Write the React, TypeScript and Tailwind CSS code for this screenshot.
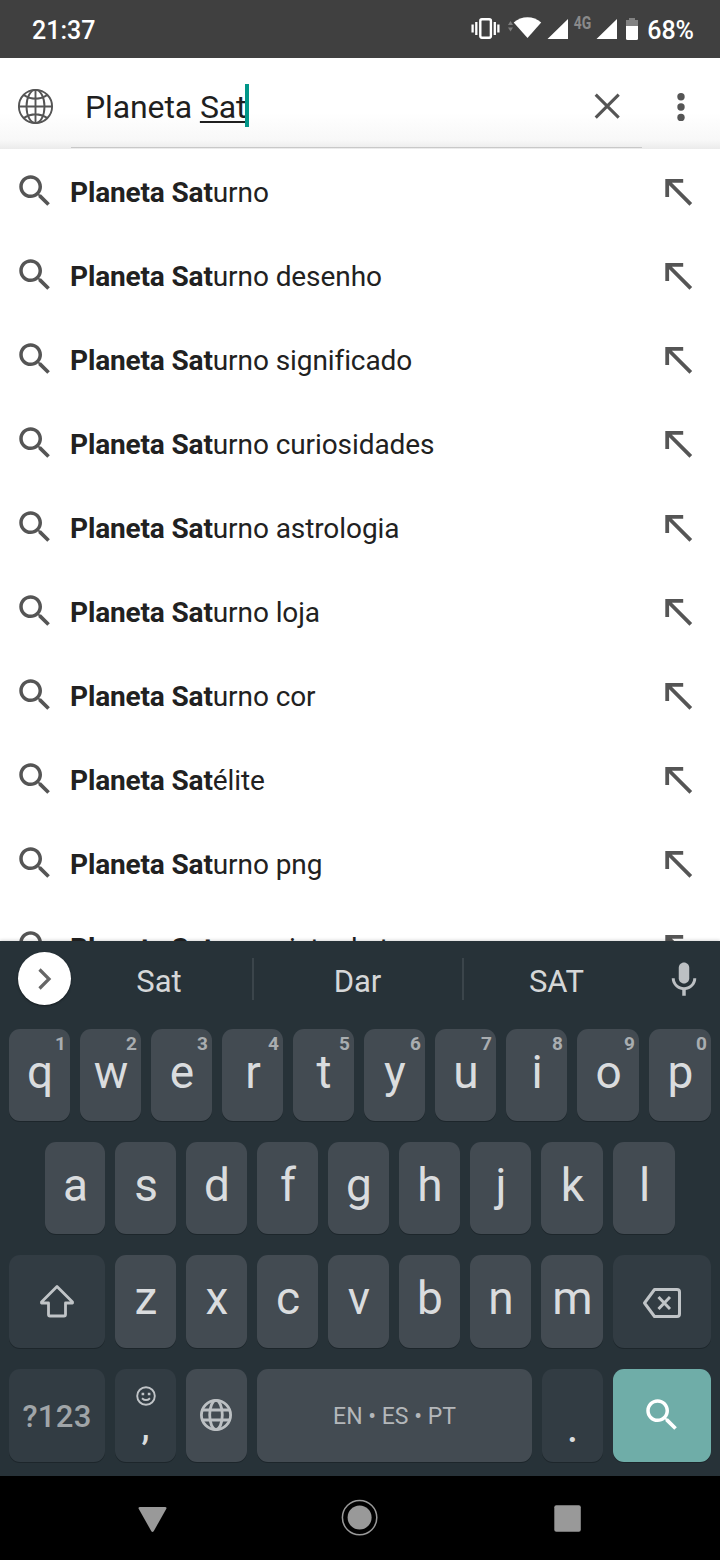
import React from 'react';

const suggestions = [
  ['Planeta Sat', 'urno'],
  ['Planeta Sat', 'urno desenho'],
  ['Planeta Sat', 'urno significado'],
  ['Planeta Sat', 'urno curiosidades'],
  ['Planeta Sat', 'urno astrologia'],
  ['Planeta Sat', 'urno loja'],
  ['Planeta Sat', 'urno cor'],
  ['Planeta Sat', 'élite'],
  ['Planeta Sat', 'urno png'],
  ['Planeta Sat', 'urno visto da terra'],
];

const SearchIcon: React.FC<{ className?: string }> = ({ className }) => (
  <svg viewBox="0 0 24 24" width="42" height="42" fill="currentColor" className={className}>
    <path d="M15.5 14h-.79l-.28-.27C15.41 12.59 16 11.11 16 9.5 16 5.91 13.09 3 9.5 3S3 5.91 3 9.5 5.91 16 9.5 16c1.61 0 3.09-.59 4.23-1.57l.27.28v.79l5 4.99L20.49 19l-4.99-5zm-6 0C7.01 14 5 11.99 5 9.5S7.01 5 9.5 5 14 7.01 14 9.5 11.99 14 9.5 14z" />
  </svg>
);

const StatusBar: React.FC = () => (
  <div className="h-[58px] bg-[#404040] text-white flex items-center justify-between pl-8 pr-[26px]">
    <span className="text-[25px] font-medium leading-[58px] pt-[3px]">21:37</span>
    <div className="flex items-center">
      <svg width="172" height="58" viewBox="468 0 172 58">
        <rect x="480.3" y="19.3" width="10.6" height="18.4" rx="1.6" fill="none" stroke="#fff" strokeWidth="2.4" />
        <path d="M476.3 22v13M472.6 24.5v8M494.8 22v13M498.4 24.5v8" stroke="#fff" strokeWidth="2.3" />
        <path d="M508 25l2.5-4 2.5 4zM508 27.5h5l-2.5 4z" fill="#7d7d7d" />
        <path d="M513.7 22.6C521.5 15.3 533.500 15.3 541.2 22.6L527.500 38z" fill="#fff" />
        <path d="M568 19v20h-20.500zM617 19v20h-20.500z" fill="#fff" />
        <text x="573.7" y="29" fontSize="17.500" fontWeight="700" fill="#8a8a8a" textLength="17.5" lengthAdjust="spacingAndGlyphs">4G</text>
        <path d="M629 18h6v2h3v6.500h-12V20h3z" fill="#828282" />
        <path d="M626 26h12v12.500q0 1.500-1.500 1.500h-9q-1.500 0-1.500-1.500z" fill="#fff" />
      </svg>
      <span className="text-[25px] font-medium leading-[58px] pt-[3px] pl-[7px]">68%</span>
    </div>
  </div>
);

const SearchBar: React.FC = () => (
  <div className="h-[91px] flex items-center bg-gradient-to-b from-white from-60% via-[#f8f8f8] via-90% to-[#ebebeb] text-[#555555]">
    <svg width="71" height="91" viewBox="0 58 71 91" fill="none" stroke="currentColor" strokeWidth="1.9">
      <circle cx="35.500" cy="106.500" r="16.600" />
      <ellipse cx="35.500" cy="106.500" rx="9" ry="16.600" />
      <path d="M35.500 90v33M19 106.500h33M23.500 95q12 7.500 24 0M23.500 118q12-7.500 24 0" />
    </svg>
    <div className="w-[571px] h-[90px] self-start border-b border-[#c8c8c8] pl-[14px] flex items-center justify-between">
      <div className="flex items-center pt-[6px] text-[32px] leading-[43px] text-[#1f1f1f]">
        <span className="whitespace-pre tracking-[-0.12px] pt-[3px]">Planeta <span className="underline decoration-2 underline-offset-[3px]">Sat</span></span>
        <span className="w-1 h-[43px] bg-[#009688] -ml-px -mt-px" />
      </div>
      <svg width="28" height="28" viewBox="593 92 28 28" className="mr-[21px] mt-[7px]" stroke="currentColor" strokeWidth="3.1">
        <path d="M595.700 94.700l23 23M618.700 94.700l-23 23" />
      </svg>
    </div>
    <svg width="78" height="91" viewBox="642 58 78 91" fill="currentColor">
      <circle cx="681" cy="96.700" r="3.700" />
      <circle cx="681" cy="107" r="3.700" />
      <circle cx="681" cy="117.400" r="3.700" />
    </svg>
  </div>
);

const Suggestion: React.FC<{ match: string; rest: string }> = ({ match, rest }) => (
  <li className="h-[84px] shrink-0 flex items-center pl-[14px] pr-[27px] text-[#555555]">
    <SearchIcon className="-mt-[2px]" />
    <span className="flex-1 pl-[14px] pt-[2px] text-[28px] leading-[82px] text-[#212121] whitespace-nowrap tracking-[-0.08px]">
      <b className="font-bold tracking-[-0.15px]">{match}</b>{rest}
    </span>
    <svg width="29" height="28" viewBox="0 0 29 28" fill="none" stroke="currentColor" strokeWidth="3.800" className="-mt-px">
      <path d="M19.200 2.800H3.200v16.300M4 3.500l22.800 22.800" />
    </svg>
  </li>
);

const Key: React.FC<{ label: string; hint?: string }> = ({ label, hint }) => (
  <div className="relative w-[61px] pl-px bg-[#434b52] rounded-[11px] shadow-[0_1px_0_#1d262b] text-center text-[46px] leading-[86px] text-[#dadcde]">
    {label}
    {hint && (
      <span className="absolute right-[4px] top-[4px] text-[19px] leading-[22px] font-bold text-[#a9adb0]">{hint}</span>
    )}
  </div>
);

const special = 'bg-[#323c43] rounded-[11px] shadow-[0_1px_0_#1d262b] flex items-center justify-center text-[#c0c4c7]';

const SuggestionStrip: React.FC = () => (
  <div className="h-[88px] flex items-start text-[31px] text-[#d5d7d8]">
    <div className="ml-[18px] mt-[11px] size-[53px] rounded-full bg-white shadow-[0_1px_2px_#151c20] flex items-center justify-center">
      <svg width="16" height="24" viewBox="0 0 16 24" fill="none" stroke="#666" strokeWidth="3.200">
        <path d="M2.500 2.500L12 12l-9.500 9.500" />
      </svg>
    </div>
    <div className="w-[176px] mr-[5px] text-center leading-[82px]">Sat</div>
    <div className="w-[2px] h-[42px] mt-[17px] bg-[#3b454b]" />
    <div className="w-[208px] pr-px text-center leading-[82px]">Dar</div>
    <div className="w-[2px] h-[42px] mt-[17px] bg-[#3b454b]" />
    <div className="w-[185px] text-center leading-[82px]">SAT</div>
    <svg width="42" height="42" viewBox="0 0 24 24" fill="#bcc0c3" className="mt-[18px] ml-[14px]">
      <path d="M12 14c1.660 0 3-1.340 3-3V5c0-1.660-1.340-3-3-3S9 3.340 9 5v6c0 1.660 1.340 3 3 3z" />
      <path d="M17.300 11c0 3-2.540 5.100-5.300 5.100S6.700 14 6.700 11H5c0 3.410 2.720 6.230 6 6.720V21h2v-3.280c3.280-.48 6-3.300 6-6.720h-1.700z" />
    </svg>
  </div>
);

const Keyboard: React.FC = () => (
  <div className="h-[535px] shrink-0 bg-[#273238] relative shadow-[0_-1px_3px_rgba(0,0,0,0.15)]">
    <SuggestionStrip />
    <div className="px-[9px] flex flex-col">
      <div className="flex gap-[10px] h-[92px] [&>*:nth-last-child(-n+2)]:w-[62px]">
        {'qwertyuiop'.split('').map((k, i) => (
          <Key key={k} label={k} hint={String((i + 1) % 10)} />
        ))}
      </div>
      <div className="flex gap-[10px] h-[92px] mt-[21px] px-[36px] [&>*:first-child]:w-[60px] [&>*:nth-last-child(-n+2)]:w-[62px]">
        {'asdfghjkl'.split('').map((k) => <Key key={k} label={k} />)}
      </div>
      <div className="flex gap-[10px] h-[93px] mt-[21px] [&>*:nth-last-child(2)]:w-[62px]">
        <div className={`${special} w-[96px]`}>
          <svg width="36" height="34" viewBox="0 0 36 34" fill="none" stroke="currentColor" strokeWidth="2.800" strokeLinejoin="round" className="mt-[-1px]">
            <path d="M18 2.500L2.500 18v1h7v11.500q0 1.500 1.500 1.500h14q1.500 0 1.500-1.500V19h7v-1z" />
          </svg>
        </div>
        {'zxcvbnm'.split('').map((k) => <Key key={k} label={k} />)}
        <div className={`${special} w-[98px]`}>
          <svg width="40" height="32" viewBox="0 0 40 32" fill="none" stroke="currentColor" strokeWidth="3" strokeLinejoin="round" className="mt-[2px]">
            <path d="M12.500 2.500h22.500q2.500 0 2.500 2.500v22q0 2.500-2.500 2.500H12.500L2.500 16z" />
            <path d="M16.500 10l11.500 12M28 10l-11.500 12" />
          </svg>
        </div>
      </div>
      <div className="flex gap-[10px] h-[93px] mt-[21px]">
        <div className={`${special} w-[96px]`}>
          <span className="text-[31px] font-medium tracking-[0.3px] text-[#a0a5a8] pt-[4px]">?123</span>
        </div>
        <div className={`${special} w-[61px] flex-col`}>
          <svg width="22" height="22" viewBox="0 0 22 22" fill="none" stroke="currentColor" strokeWidth="1.900">
            <circle cx="11" cy="11" r="8.800" />
            <path d="M7 13.200q4 3.800 8 0" />
            <path d="M6.600 9h2.600M12.800 9h2.600" strokeWidth="2.400" />
          </svg>
          <span className="text-[36px] leading-[40px] font-medium text-[#dadcde]">,</span>
        </div>
        <div className="w-[61px] bg-[#434b52] rounded-[11px] shadow-[0_1px_0_#1d262b] flex items-center justify-center">
          <svg width="34" height="34" viewBox="0 0 34 34" fill="none" stroke="#bcc0c3" strokeWidth="2.800" className="mt-[-1px] mr-px">
            <circle cx="17" cy="17" r="14.600" />
            <ellipse cx="17" cy="17" rx="6.300" ry="14.600" />
            <path d="M3.500 12h27M3.500 22h27" />
          </svg>
        </div>
        <div className="w-[275px] bg-[#434b52] rounded-[11px] shadow-[0_1px_0_#1d262b] text-center text-[23px] leading-[95px] text-[#b4b7ba]">
          EN • ES • PT
        </div>
        <div className={`${special} w-[61px]`}>
          <span className="text-[46px] text-[#dadcde] pt-[22px]">.</span>
        </div>
        <div className="flex-1 bg-[#6fada8] rounded-[11px] shadow-[0_1px_0_#1d262b] flex items-center justify-center text-white">
          <SearchIcon className="mt-[-1px]" />
        </div>
      </div>
    </div>
  </div>
);

const NavBar: React.FC = () => (
  <div className="h-[84px] shrink-0 bg-black flex items-center">
    <svg width="720" height="84" viewBox="0 1476 720 84" fill="#999">
      <path d="M140 1507h25q2.200 0 1.200 1.900L153.800 1531q-1.300 2-2.600 0L138.800 1508.900q-1-1.900 1.200-1.900z" />
      <circle cx="359.600" cy="1517.600" r="17.200" fill="none" stroke="#999" strokeWidth="1.500" />
      <circle cx="359.600" cy="1517.600" r="12" />
      <rect x="554.300" y="1505.200" width="26.500" height="26.500" rx="2" />
    </svg>
  </div>
);

export const App: React.FC = () => {
  return (
    <div className="w-[720px] h-[1560px] overflow-hidden flex flex-col bg-white font-[Roboto,sans-serif]">
      <StatusBar />
      <SearchBar />
      <ul className="flex-1 min-h-0 overflow-hidden flex flex-col pt-px">
        {suggestions.map(([match, rest]) => (
          <Suggestion key={match + rest} match={match} rest={rest} />
        ))}
      </ul>
      <Keyboard />
      <NavBar />
    </div>
  );
};

export default App;
